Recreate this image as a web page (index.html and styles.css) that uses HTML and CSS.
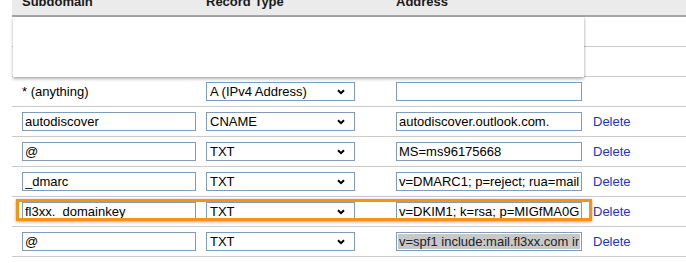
FILE: index.html
```html
<!DOCTYPE html>
<html>
<head>
<meta charset="utf-8">
<link rel="stylesheet" href="styles.css">
</head>
<body>
<div class="dns">
  <div class="row head">
    <div class="cell">Subdomain</div>
    <div class="cell">Record Type</div>
    <div class="cell">Address</div>
    <div class="cell"></div>
  </div>
  <div class="row"><div class="cell"></div><div class="cell"></div><div class="cell"></div><div class="cell"></div></div>
  <div class="row"><div class="cell"></div><div class="cell"></div><div class="cell"></div><div class="cell"></div></div>
  <div class="row">
    <div class="cell">* (anything)</div>
    <div class="cell"><div class="select"><span>A (IPv4 Address)</span><svg width="8" height="6" viewBox="0 0 8 6"><path d="M1 1.2 L4 4.2 L7 1.2" fill="none" stroke="#000" stroke-width="2"/></svg></div></div>
    <div class="cell"><input class="addr" type="text" value=""></div>
    <div class="cell"></div>
  </div>
  <div class="row">
    <div class="cell"><input class="sub" type="text" value="autodiscover"></div>
    <div class="cell"><div class="select"><span>CNAME</span><svg width="8" height="6" viewBox="0 0 8 6"><path d="M1 1.2 L4 4.2 L7 1.2" fill="none" stroke="#000" stroke-width="2"/></svg></div></div>
    <div class="cell"><input class="addr" type="text" value="autodiscover.outlook.com."></div>
    <div class="cell"><a class="del" href="#">Delete</a></div>
  </div>
  <div class="row">
    <div class="cell"><input class="sub" type="text" value="@"></div>
    <div class="cell"><div class="select"><span>TXT</span><svg width="8" height="6" viewBox="0 0 8 6"><path d="M1 1.2 L4 4.2 L7 1.2" fill="none" stroke="#000" stroke-width="2"/></svg></div></div>
    <div class="cell"><input class="addr" type="text" value="MS=ms96175668"></div>
    <div class="cell"><a class="del" href="#">Delete</a></div>
  </div>
  <div class="row">
    <div class="cell"><input class="sub" type="text" value="_dmarc"></div>
    <div class="cell"><div class="select"><span>TXT</span><svg width="8" height="6" viewBox="0 0 8 6"><path d="M1 1.2 L4 4.2 L7 1.2" fill="none" stroke="#000" stroke-width="2"/></svg></div></div>
    <div class="cell"><input class="addr" type="text" value="v=DMARC1; p=reject; rua=mailto:dmarc@fl3xx.com"></div>
    <div class="cell"><a class="del" href="#">Delete</a></div>
  </div>
  <div class="row">
    <div class="cell"><input class="sub" type="text" value="fl3xx._domainkey"></div>
    <div class="cell"><div class="select"><span>TXT</span><svg width="8" height="6" viewBox="0 0 8 6"><path d="M1 1.2 L4 4.2 L7 1.2" fill="none" stroke="#000" stroke-width="2"/></svg></div></div>
    <div class="cell"><input class="addr" type="text" value="v=DKIM1; k=rsa; p=MIGfMA0GCSqGSIb3DQEBAQUAA4GNADCBiQKBgQ"></div>
    <div class="cell"><a class="del" href="#">Delete</a></div>
    <div class="mark"></div>
  </div>
  <div class="row">
    <div class="cell"><input class="sub" type="text" value="@"></div>
    <div class="cell"><div class="select"><span>TXT</span><svg width="8" height="6" viewBox="0 0 8 6"><path d="M1 1.2 L4 4.2 L7 1.2" fill="none" stroke="#000" stroke-width="2"/></svg></div></div>
    <div class="cell"><input class="addr sel" type="text" value="v=spf1 include:mail.fl3xx.com include:spf.protection.outlook.com -all"></div>
    <div class="cell"><a class="del" href="#">Delete</a></div>
  </div>
  <div class="popup"></div>
</div>
</body>
</html>
```
FILE: styles.css
```css
html, body {
  margin: 0;
  padding: 0;
  background: #fff;
  overflow: hidden;
}
body {
  font-family: "Liberation Sans", Arial, sans-serif;
  font-size: 13px;
  color: #000;
}
.dns {
  position: relative;
  margin: -8px 0 0 12px;
}
.row {
  position: relative;
  display: grid;
  grid-template-columns: 184px 190px 197px 1fr;
  height: 29px;
  border-bottom: 1px solid #cacaca;
  align-items: center;
}
.row.head {
  height: 23px;
  background: #ebebeb;
  border-bottom: 2px solid #a6a6a6;
  align-items: start;
  font-weight: bold;
  color: #1a1a1a;
}
.head .cell {
  padding-top: 2px;
}
.cell {
  padding-left: 10px;
  line-height: 15px;
  white-space: nowrap;
}
input {
  box-sizing: border-box;
  height: 19px;
  margin: 0;
  display: block;
  border: 1px solid #7f9db9;
  padding: 0 2px;
  font-family: "Liberation Sans", Arial, sans-serif;
  font-size: 13px;
  color: #000;
  background: #fff;
  outline: none;
}
.sub { width: 174px; }
.addr { width: 186px; }
.sel {
  background: #c8c8c8;
  box-shadow: inset 0 0 0 1px #fff;
  color: #222;
}
.select {
  box-sizing: border-box;
  width: 149px;
  height: 19px;
  border: 1px solid #7f9db9;
  display: flex;
  align-items: center;
  justify-content: space-between;
  padding: 0 9px 0 3px;
}
.select svg { display: block; }
.del {
  color: #2233cc;
  text-decoration: none;
}
.popup {
  position: absolute;
  left: 1px;
  top: 25px;
  width: 571px;
  height: 60px;
  background: #fff;
  box-shadow: 0 2px 3px rgba(0,0,0,0.3), 1px 0 2px rgba(0,0,0,0.08);
}
.mark {
  position: absolute;
  left: 4px;
  top: 2px;
  width: 576px;
  height: 22px;
  box-sizing: border-box;
  border: 3px solid #f7940f;
  box-shadow: 0 1px 3px rgba(0,0,0,0.35);
  pointer-events: none;
}
```
